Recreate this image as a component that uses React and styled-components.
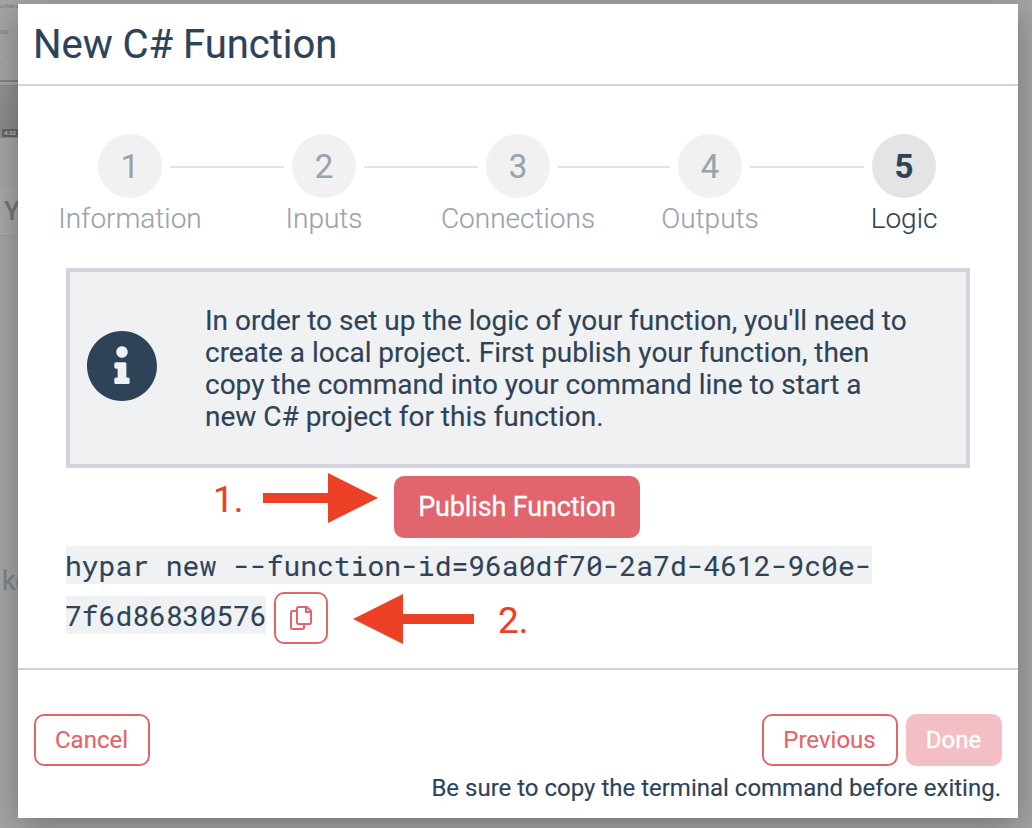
import React from "react";
import styled, { createGlobalStyle } from "styled-components";

const ink = "#2e4358";
const coral = "#e0656d";
const rule = "#d2d3df";
const marker = "#ec4127";

const GlobalStyle = createGlobalStyle`
  * { box-sizing: border-box; }
  body {
    margin: 0;
    overflow: hidden;
    background: #a4a4a4;
    color: ${ink};
    font-family: Roboto, "Liberation Sans", sans-serif;
    -webkit-text-stroke: 0.15px;
  }
`;

const Screen = styled.div`
  position: relative;
  width: 1032px;
  height: 828px;
  padding: 4px 14px 10px 18px;
  overflow: hidden;
`;

const Backdrop = styled.div`
  position: absolute;
  inset: 0;
  background: #a5a5a5;
`;

const BackdropText = styled.span`
  position: absolute;
  left: ${(p) => p.$x}px;
  top: ${(p) => p.$y}px;
  font-size: ${(p) => p.$size}px;
  line-height: 1;
  font-weight: ${(p) => p.$weight || 400};
  color: ${(p) => p.$color || "#858585"};
  white-space: nowrap;
`;

const BackdropRule = styled.div`
  position: absolute;
  left: 0;
  top: 80px;
  width: 18px;
  height: 2px;
  background: #858180;
`;

const Thumbnail = styled.div`
  position: absolute;
  left: 0;
  top: 85px;
  width: 20px;
  height: 53px;
  background: linear-gradient(#929292, #8b8a89);
  border-top: 1px solid #858c92;
`;

const Duration = styled.span`
  position: absolute;
  left: 2px;
  top: 43px;
  width: 20px;
  height: 8px;
  padding-left: 2px;
  background: #656565;
  color: #b5b5b5;
  font-size: 6px;
  line-height: 8px;
  font-weight: 700;
`;

const BackdropPanel = styled.div`
  position: absolute;
  left: 0;
  top: 186px;
  width: 20px;
  height: 50px;
  background: #a8a8a8;
  border-bottom: 1px solid #9c9c9c;
`;

const Modal = styled.section`
  position: relative;
  display: flex;
  flex-direction: column;
  width: 1000px;
  height: 814px;
  background: #fff;
  box-shadow: 0 8px 32px rgba(0, 0, 0, 0.3);
`;

const Header = styled.header`
  height: 82px;
  padding: 0 15px;
  border-bottom: 2px solid ${rule};
`;

const Title = styled.h1`
  margin: 0;
  font-size: 40px;
  font-weight: 400;
  line-height: 82px;
  letter-spacing: -0.03px;
`;

const Body = styled.div`
  display: flex;
  flex-direction: column;
  height: 584px;
  padding: 48px 48px 0;
  border-bottom: 2px solid ${rule};
`;

const Steps = styled.ol`
  display: flex;
  align-items: flex-start;
  height: 134px;
  margin: 0;
  padding: 0 34px 0 32px;
  list-style: none;
`;

const Step = styled.li`
  display: flex;
  flex-direction: column;
  align-items: center;
  flex: 0 0 64px;
  width: 64px;
  color: ${(p) => (p.$active ? ink : "#98a3af")};
`;

const StepNumber = styled.span`
  width: 64px;
  height: 64px;
  border-radius: 50%;
  background: ${(p) => (p.$active ? "#e4e4e4" : "#f1f1f1")};
  font-size: 33px;
  font-weight: ${(p) => (p.$active ? 700 : 400)};
  line-height: 66px;
  text-align: center;
`;

const StepLabel = styled.span`
  margin-top: 4px;
  font-size: 28px;
  font-weight: 300;
  line-height: 33px;
  white-space: nowrap;
`;

const Connector = styled.li`
  flex: 0 0 ${(p) => p.$width}px;
  height: 2px;
  margin: 32px 8px 0;
  background: #e4e4e4;
`;

const Notice = styled.div`
  display: flex;
  align-items: center;
  height: 200px;
  padding: 0 17px 0 17px;
  border: 4px solid ${rule};
  background: #f0f1f3;
`;

const InfoIcon = styled.svg`
  flex: none;
  width: 70px;
  height: 70px;
  margin-top: -4px;
`;

const NoticeText = styled.p`
  margin: 2px 0 0 48px;
  font-size: 28px;
  line-height: 32px;
  letter-spacing: -0.01px;
  white-space: nowrap;
`;

const Button = styled.button`
  height: 52px;
  width: ${(p) => p.$width}px;
  padding: 0 1px 0 0;
  border: 2px solid ${coral};
  border-radius: 10px;
  background: #fff;
  color: ${coral};
  font-family: inherit;
  font-size: 24px;
  line-height: 48px;
  -webkit-text-stroke: inherit;
`;

const DoneButton = styled(Button)`
  border-color: #f3bfc4;
  background: #f3bfc4;
  color: #fff;
  -webkit-text-stroke: 0.3px;
`;

const PublishButton = styled(Button)`
  align-self: center;
  height: 62px;
  margin: 8px 0 0 -2px;
  padding: 0;
  background: ${coral};
  color: #fff;
  font-size: 27px;
  letter-spacing: -0.15px;
  line-height: 58px;
  -webkit-text-stroke: 0.3px;
`;

const Command = styled.div`
  margin-top: 2px;
`;

const CommandLine = styled.div`
  display: flex;
  align-items: center;
  height: 50px;
`;

const Code = styled.code`
  width: ${(p) => p.$width}px;
  height: 38px;
  background: #f0f1f3;
  font-family: "Roboto Mono", "DejaVu Sans Mono", "Liberation Mono", monospace;
  font-size: 28px;
  line-height: 40px;
  text-indent: -1px;
  white-space: pre;
`;

const CopyButton = styled(Button)`
  display: flex;
  margin: 6px 0 0 8px;
`;

const CopyIcon = styled.svg`
  width: 24px;
  height: 26px;
  margin: 11px 0 0 13px;
`;

const Footer = styled.footer`
  padding: 44px 16px 0;
`;

const Actions = styled.div`
  display: flex;
  gap: 8px;
`;

const Spacer = styled.div`
  flex: 1;
`;

const Reminder = styled.p`
  margin: 7px 1px 0 0;
  font-size: 24px;
  line-height: 30px;
  text-align: right;
`;

const Arrow = styled.svg`
  position: absolute;
  left: ${(p) => p.$x}px;
  top: ${(p) => p.$y}px;
  fill: ${marker};
`;

const Callout = styled.span`
  position: absolute;
  left: ${(p) => p.$x}px;
  top: ${(p) => p.$y}px;
  color: ${marker};
  font-size: 37px;
  line-height: 44px;
`;

const steps = [
  { label: "Information" },
  { label: "Inputs", lead: 114 },
  { label: "Connections", lead: 114 },
  { label: "Outputs", lead: 112 },
  { label: "Logic", lead: 114, active: true },
];

export default function App() {
  return (
    <Screen>
      <GlobalStyle />
      <Backdrop>
        <BackdropText $x={0} $y={3} $size={6}>cribers</BackdropText>
        <BackdropText $x={0} $y={28} $size={8}>os</BackdropText>
        <BackdropText $x={0} $y={58} $size={8}>.</BackdropText>
        <BackdropRule />
        <Thumbnail>
          <Duration>4:22</Duration>
        </Thumbnail>
        <BackdropPanel />
        <BackdropText $x={4} $y={198} $size={26} $weight={500} $color="#73777b">Y</BackdropText>
        <BackdropText $x={2} $y={568} $size={27} $color="#7f8387">ke</BackdropText>
      </Backdrop>
      <Modal>
        <Header>
          <Title>New C# Function</Title>
        </Header>
        <Body>
          <Steps>
            {steps.map(({ label, lead, active }, i) => (
              <React.Fragment key={label}>
                {lead && <Connector $width={lead} aria-hidden="true" />}
                <Step $active={active}>
                  <StepNumber $active={active}>{i + 1}</StepNumber>
                  <StepLabel>{label}</StepLabel>
                </Step>
              </React.Fragment>
            ))}
          </Steps>
          <Notice>
            <InfoIcon viewBox="0 0 512 512">
              <path
                fill={ink}
                d="M256 0C114.6 0 0 114.6 0 256s114.6 256 256 256 256-114.6 256-256S397.400 0 256 0zm0 112c23.200 0 42 18.800 42 42s-18.800 42-42 42-42-18.800-42-42 18.800-42 42-42zm56 264c0 6.600-5.400 12-12 12h-88c-6.600 0-12-5.400-12-12v-24c0-6.600 5.400-12 12-12h12v-64h-12c-6.600 0-12-5.400-12-12v-24c0-6.600 5.400-12 12-12h64c6.600 0 12 5.400 12 12v100h12c6.600 0 12 5.400 12 12v24z"
              />
            </InfoIcon>
            <NoticeText>
              In order to set up the logic of your function, you'll need to
              <br />
              create a local project. First publish your function, then
              <br />
              copy the command into your command line to start a
              <br />
              new C# project for this function.
            </NoticeText>
          </Notice>
          <PublishButton $width={246}>Publish Function</PublishButton>
          <Command>
            <CommandLine>
              <Code $width={806}>hypar new --function-id=96a0df70-2a7d-4612-9c0e-</Code>
            </CommandLine>
            <CommandLine>
              <Code $width={200}>7f6d86830576</Code>
              <CopyButton $width={54} aria-label="Copy command">
                <CopyIcon viewBox="0 0 24 26" fill="none" stroke={coral} strokeWidth="2">
                  <path d="M8 6H3.500Q2 6 2 7.500v15Q2 24 3.500 24h10q1.500 0 1.500-1.500V19" />
                  <path d="M9.500 2H18l4 4v11.500q0 1.500-1.500 1.500h-11Q8 19 8 17.500v-14Q8 2 9.500 2zM17 2v5h5" />
                </CopyIcon>
              </CopyButton>
            </CommandLine>
          </Command>
        </Body>
        <Footer>
          <Actions>
            <Button $width={116}>Cancel</Button>
            <Spacer />
            <Button $width={136}>Previous</Button>
            <DoneButton $width={96}>Done</DoneButton>
          </Actions>
          <Reminder>Be sure to copy the terminal command before exiting.</Reminder>
        </Footer>
      </Modal>
      <Callout $x={213} $y={478}>1.</Callout>
      <Arrow $x={263} $y={473} width="115" height="50">
        <path d="M0 20h65V0l50 25-50 25V30H0z" />
      </Arrow>
      <Arrow $x={353} $y={594} width="121" height="50">
        <path d="M121 20H50V0L0 25l50 25V30h71z" />
      </Arrow>
      <Callout $x={498} $y={599}>2.</Callout>
    </Screen>
  );
}
